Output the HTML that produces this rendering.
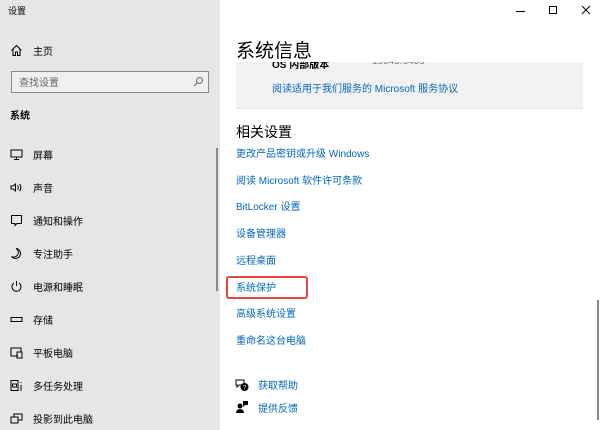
<!DOCTYPE html>
<html><head><meta charset="utf-8"><style>
*{margin:0;padding:0;box-sizing:border-box}
body{width:600px;height:430px;overflow:hidden;background:#fff;font-family:"Liberation Sans","Noto Sans CJK SC",sans-serif;position:relative;color:#000}
.a{position:absolute;white-space:nowrap}
#side{position:absolute;left:0;top:0;width:220px;height:430px;background:#e6e6e6}
.si{font-size:10px;color:#000}
.ic{position:absolute;left:10px;width:13px;height:13px}
.lk{font-size:10px;color:#0067c0}
</style></head><body>
<div id="side">
<div class="a" style="left:8px;top:4px;font-size:9px">设置</div>
<svg class="ic" style="top:44px" viewBox="0 0 13 13" fill="none" stroke="#000" stroke-width="1"><path d="M1.5 6.5L6.5 1.5L11.5 6.5M3 5v6.5h2.5V8h2v3.5H10V5"/></svg>
<div class="a si" style="left:33px;top:43px">主页</div>
<div class="a" style="left:11px;top:71px;width:198px;height:22px;border:1px solid #8a8a8a;background:#f0f0f0"></div>
<div class="a" style="left:19px;top:74px;font-size:10px;color:#666">查找设置</div>
<svg class="a" style="left:193px;top:76px" width="11" height="11" viewBox="0 0 11 11" fill="none" stroke="#666"><circle cx="6.5" cy="4.5" r="3"/><path d="M4.3 6.7L1 10"/></svg>
<div class="a" style="left:10px;top:107px;font-size:10px;font-weight:bold">系统</div>
<div class="a" style="left:216px;top:148px;width:2px;height:143px;background:#8a8a8a"></div>

<svg class="ic" style="top:148px" viewBox="0 0 13 13" fill="none" stroke="#000"><rect x="1" y="2" width="11" height="7"/><path d="M6.5 9v2M4 11.5h5"/></svg>
<div class="a si" style="left:33px;top:147px">屏幕</div>
<svg class="ic" style="top:181px" viewBox="0 0 13 13" fill="none" stroke="#000"><path d="M1 5h2l2.5-2v7L3 8H1z M7.5 4.5a3 3 0 0 1 0 4 M9.5 3a5 5 0 0 1 0 7"/></svg>
<div class="a si" style="left:33px;top:180px">声音</div>
<svg class="ic" style="top:214px" viewBox="0 0 13 13" fill="none" stroke="#000"><path d="M1.5 1.5h10v8H7l-2 2v-2H1.5z"/></svg>
<div class="a si" style="left:33px;top:213px">通知和操作</div>
<svg class="ic" style="top:247px" viewBox="0 0 13 13" fill="none" stroke="#000"><path d="M6 1.5a5 5 0 1 1-4.5 8 4.5 4.5 0 0 0 4.5-8z"/></svg>
<div class="a si" style="left:33px;top:246px">专注助手</div>
<svg class="ic" style="top:280px" viewBox="0 0 13 13" fill="none" stroke="#000"><path d="M4 3a4.5 4.5 0 1 0 5 0M6.5 1v5"/></svg>
<div class="a si" style="left:33px;top:279px">电源和睡眠</div>
<svg class="ic" style="top:313px" viewBox="0 0 13 13" fill="none" stroke="#000"><rect x="1" y="4.5" width="11" height="4"/></svg>
<div class="a si" style="left:33px;top:312px">存储</div>
<svg class="ic" style="top:346px" viewBox="0 0 13 13" fill="none" stroke="#000"><path d="M8 10H1V2h10v4"/><rect x="7" y="6" width="5" height="6"/></svg>
<div class="a si" style="left:33px;top:345px">平板电脑</div>
<svg class="ic" style="top:379px" viewBox="0 0 13 13" fill="none" stroke="#000"><path d="M1 1v11M8 1v11M1 1.5h7M1 11.5h7M2.5 5h4v3h-4z M11 3v1M11 6v6"/></svg>
<div class="a si" style="left:33px;top:378px">多任务处理</div>
<svg class="ic" style="top:412px" viewBox="0 0 13 13" fill="none" stroke="#000"><rect x="1" y="5" width="7" height="6"/><path d="M4 5V2h8v6H8"/></svg>
<div class="a si" style="left:33px;top:411px">投影到此电脑</div>
</div>

<svg class="a" style="left:516px;top:5px" width="80" height="12" viewBox="0 0 80 12" fill="none" stroke="#000" stroke-width="1"><path d="M0 6.5h9"/><rect x="33.5" y="1.5" width="7" height="7"/><path d="M66 1l8 8M74 1l-8 8"/></svg>

<div class="a" style="left:236px;top:36px;font-size:19px">系统信息</div>
<div class="a" style="left:236px;top:62px;width:347px;height:47px;background:#f2f2f2;border-bottom:1px solid #e0e0e0;overflow:hidden">
<div class="a" style="left:36px;top:-6px;font-size:10px;font-weight:bold">OS 内部版本</div>
<div class="a" style="left:136px;top:-6px;font-size:10px;color:#777">19045.6456</div>
<div class="a lk" style="left:36px;top:18px">阅读适用于我们服务的 Microsoft 服务协议</div>
</div>
<div class="a" style="left:236px;top:122px;font-size:14px">相关设置</div>
<div class="a lk" style="left:236px;top:145px">更改产品密钥或升级 Windows</div>
<div class="a lk" style="left:236px;top:172px">阅读 Microsoft 软件许可条款</div>
<div class="a lk" style="left:236px;top:198px">BitLocker 设置</div>
<div class="a lk" style="left:236px;top:225px">设备管理器</div>
<div class="a lk" style="left:236px;top:252px">远程桌面</div>
<div class="a" style="left:226px;top:276px;width:82px;height:23px;border:2px solid #e8463f;border-radius:3px"></div>
<div class="a lk" style="left:236px;top:279px">系统保护</div>
<div class="a lk" style="left:236px;top:305px">高级系统设置</div>
<div class="a lk" style="left:236px;top:332px">重命名这台电脑</div>
<svg class="a" style="left:235px;top:378px" width="14" height="14" viewBox="0 0 14 14"><path d="M1 2h8v5H4l-2 2V7H1z" fill="none" stroke="#000"/><circle cx="9.5" cy="9" r="4" fill="#000"/><text x="8" y="11.5" font-size="6" fill="#fff">?</text></svg>
<div class="a lk" style="left:258px;top:377px">获取帮助</div>
<svg class="a" style="left:235px;top:400px" width="14" height="14" viewBox="0 0 14 14" fill="#000"><circle cx="5" cy="6" r="2.5"/><path d="M1 13a4 4 0 0 1 8 0z M8 1h5v4H10l-2 2z"/></svg>
<div class="a lk" style="left:258px;top:400px">提供反馈</div>
<div class="a" style="left:597px;top:300px;width:2px;height:120px;background:#8a8a8a"></div>
</body></html>
